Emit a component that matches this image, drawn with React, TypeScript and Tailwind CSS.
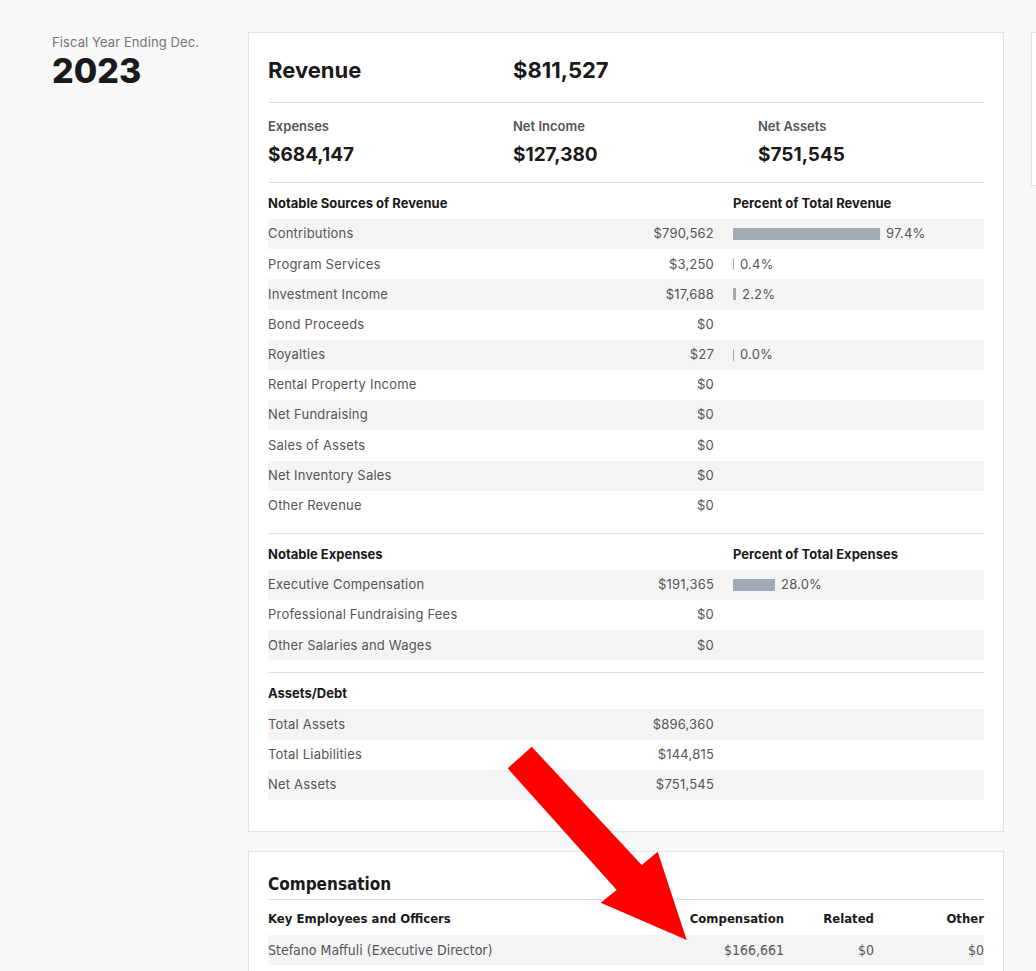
import React from "react"

const revenue = [
  { label: "Contributions", value: "$790,562", pct: 97.4 },
  { label: "Program Services", value: "$3,250", pct: 0.4 },
  { label: "Investment Income", value: "$17,688", pct: 2.2 },
  { label: "Bond Proceeds", value: "$0" },
  { label: "Royalties", value: "$27", pct: 0.0 },
  { label: "Rental Property Income", value: "$0" },
  { label: "Net Fundraising", value: "$0" },
  { label: "Sales of Assets", value: "$0" },
  { label: "Net Inventory Sales", value: "$0" },
  { label: "Other Revenue", value: "$0" },
]

const expenses = [
  { label: "Executive Compensation", value: "$191,365", pct: 28.0 },
  { label: "Professional Fundraising Fees", value: "$0" },
  { label: "Other Salaries and Wages", value: "$0" },
]

const assets = [
  { label: "Total Assets", value: "$896,360" },
  { label: "Total Liabilities", value: "$144,815" },
  { label: "Net Assets", value: "$751,545" },
]

type Row = { label: string; value: string; pct?: number }

function Table({ title, pctTitle, rows }: { title: string; pctTitle?: string; rows: Row[] }) {
  return (
    <div>
      <div className="flex h-[36px] items-center pt-[5px] text-[13px] font-bold text-[#1a1a1a]">
        <div className="w-[465px]">{title}</div>
        {pctTitle && <div>{pctTitle}</div>}
      </div>
      {rows.map((r, i) => (
        <div
          key={r.label}
          className={`flex h-[30.2px] items-center text-[13px] tracking-[0.2px] text-[#555] ${i % 2 === 0 ? "bg-[#f4f4f4]" : ""}`}
        >
          <div className="w-[340px]">{r.label}</div>
          <div className="w-[106px] text-right">{r.value}</div>
          {r.pct !== undefined && (
            <div className="ml-[19px] flex items-center">
              <div
                className="h-[12px] bg-[#9faab4]"
                style={{ width: Math.max(1, Math.round(r.pct * 1.51)) + "px" }}
              />
              <span className="ml-[6px]">{r.pct.toFixed(1)}%</span>
            </div>
          )}
        </div>
      ))}
    </div>
  )
}

export default function App() {
  return (
    <div
      className="relative min-h-[971px] overflow-hidden bg-[#f7f8f8]"
      style={{ fontFamily: "Inter, 'Liberation Sans', sans-serif" }}
    >
      <div className="flex gap-[27px] pl-[52px] pt-[32px]">
        <div className="w-[169px] shrink-0">
          <div className="mt-[1px] text-[13px] tracking-[0.1px] text-[#767676]">Fiscal Year Ending Dec.</div>
          <div className="-mt-[1px] text-[34px] font-extrabold leading-[38px] text-[#1a1a1a]">2023</div>
        </div>

        <div className="w-[756px] shrink-0">
          <div className="border border-[#e1e3e3] bg-white px-[19px] pb-[31px]">
            <div className="flex h-[70px] items-center border-b border-[#dedede] pt-[6px] text-[22px] font-bold text-[#1a1a1a]">
              <div className="w-[245px] shrink-0">Revenue</div>
              <div>$811,527</div>
            </div>
            <div className="flex h-[80px] border-b border-[#dedede] pt-[14px]">
              {[
                ["Expenses", "$684,147"],
                ["Net Income", "$127,380"],
                ["Net Assets", "$751,545"],
              ].map(([l, v]) => (
                <div key={l} className="w-[245px] shrink-0">
                  <div className="text-[13px] font-semibold text-[#555]">{l}</div>
                  <div className="mt-[4px] text-[19px] font-bold text-[#1a1a1a]">{v}</div>
                </div>
              ))}
            </div>
            <div className="border-b border-[#dedede] pb-[12px]">
              <Table title="Notable Sources of Revenue" pctTitle="Percent of Total Revenue" rows={revenue} />
            </div>
            <div className="border-b border-[#dedede] pb-[12px]">
              <Table title="Notable Expenses" pctTitle="Percent of Total Expenses" rows={expenses} />
            </div>
            <Table title="Assets/Debt" rows={assets} />
          </div>

          <div
            className="mt-[19px] border border-[#e1e3e3] bg-white px-[19px] pb-[20px] pt-[20px]"
            style={{ fontFamily: "'Liberation Sans Narrow', 'DejaVu Sans Condensed', 'Liberation Sans', sans-serif" }}
          >
            <div className="border-b border-[#dedede] pb-[3px] text-[17px] font-bold leading-[24px] text-[#1a1a1a]">
              Compensation
            </div>
            <div className="flex h-[35px] items-center pt-[3px] text-[13px] font-bold text-[#1a1a1a]">
              <div className="flex-1">Key Employees and Officers</div>
              <div className="w-[120px] text-right">Compensation</div>
              <div className="w-[90px] text-right">Related</div>
              <div className="w-[110px] text-right">Other</div>
            </div>
            <div className="flex h-[30px] items-center bg-[#f4f4f4] text-[14px] text-[#555]">
              <div className="flex-1">Stefano Maffuli (Executive Director)</div>
              <div className="w-[120px] text-right">$166,661</div>
              <div className="w-[90px] text-right">$0</div>
              <div className="w-[110px] text-right">$0</div>
            </div>
          </div>
        </div>

        <div className="h-[154px] w-[200px] shrink-0 border border-[#e1e3e3] bg-white" />
      </div>

      <svg className="pointer-events-none absolute left-0 top-0" width="1036" height="971">
        <polygon
          points="507.7,768.3 531.7,746.7 641.7,865 657.7,851.7 686.7,940 600.7,902.7 616.7,890"
          fill="#ff0000"
        />
      </svg>
    </div>
  )
}
